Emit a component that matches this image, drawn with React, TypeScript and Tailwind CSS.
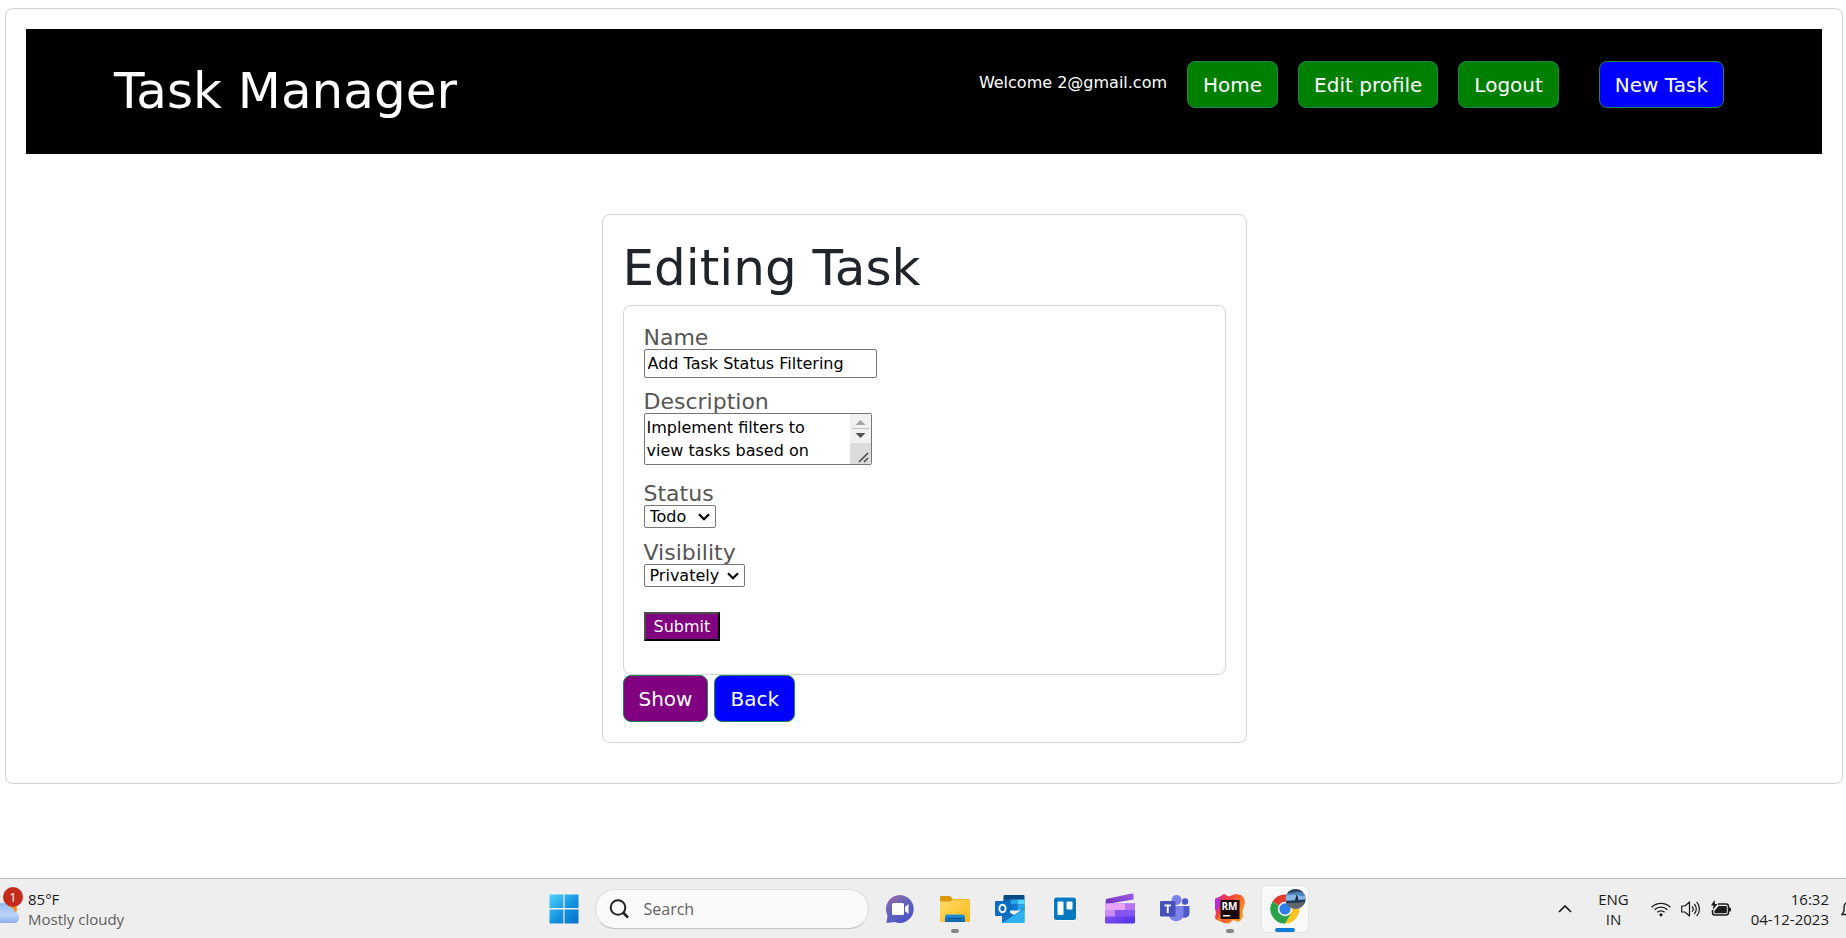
import type { ReactNode } from "react";

const navButton =
  "flex h-[47px] items-center rounded-lg border border-[#198754] px-[15px] text-xl text-white";

function StartIcon() {
  return (
    <svg width="30" height="30" viewBox="0 0 30 30" aria-hidden="true">
      <defs>
        <linearGradient id="win" x1="0" y1="0" x2="1" y2="1">
          <stop offset="0" stopColor="#4fd3fd" />
          <stop offset="0.55" stopColor="#1492de" />
          <stop offset="1" stopColor="#0570cb" />
        </linearGradient>
      </defs>
      <path
        d="M1 0.5h13.3v13.6H0.500V1zM15.500 0.500H29l.5.5v13.100H15.500zM.5 15.600h13.800V29.500H1L.5 29zM15.500 15.600h14V29l-.5.5H15.500z"
        fill="url(#win)"
      />
    </svg>
  );
}

function ChatIcon() {
  return (
    <svg width="30" height="30" viewBox="0 0 30 30" aria-hidden="true">
      <defs>
        <linearGradient id="chat" x1="0" y1="0" x2="0.6" y2="1">
          <stop offset="0" stopColor="#a56cae" />
          <stop offset="0.5" stopColor="#6264b8" />
          <stop offset="1" stopColor="#4f52c4" />
        </linearGradient>
      </defs>
      <path d="M15 1a14 14 0 1 1-5.500 27L1.500 29l1-7.500A14 14 0 0 1 15 1z" fill="url(#chat)" />
      <rect x="7" y="9" width="12" height="12" rx="1.500" fill="#fff" />
      <path d="M20 13l3.500-3v10L20 17z" fill="#fff" />
    </svg>
  );
}

function FolderIcon() {
  return (
    <svg width="30" height="30" viewBox="0 0 30 30" aria-hidden="true">
      <defs>
        <linearGradient id="fold" x1="0" y1="0" x2="1" y2="1">
          <stop offset="0" stopColor="#ffdc6a" />
          <stop offset="1" stopColor="#fbb917" />
        </linearGradient>
        <linearGradient id="foldtab" x1="0" y1="0" x2="0" y2="1">
          <stop offset="0" stopColor="#1b93dc" />
          <stop offset="1" stopColor="#0f65ae" />
        </linearGradient>
      </defs>
      <path d="M0 3.500C0 2.500.7 2 1.500 2H10l3 3h15.500c1 0 1.500.5 1.500 1.500V10H0z" fill="#dd9a08" />
      <path d="M0 7.500h10.500l2.500-2H30V28H0z" fill="url(#fold)" />
      <path d="M5 28v-5a2.500 2.500 0 0 1 2.500-2.500h15A2.500 2.500 0 0 1 25 23v5z" fill="url(#foldtab)" />
      <rect x="8" y="24" width="14" height="1" fill="#0b4b86" />
    </svg>
  );
}

function OutlookIcon() {
  return (
    <svg width="30" height="30" viewBox="0 0 30 30" aria-hidden="true">
      <path d="M9.500 1h19a1 1 0 0 1 1 1v14h-21V2a1 1 0 0 1 1-1z" fill="#0a4a86" />
      <path d="M8.500 5.500h7v5h-7z" fill="#0f62a8" />
      <path d="M15.500 5.500h7v5h-7z" fill="#28a8ea" />
      <path d="M22.500 5.500h7v5h-7z" fill="#50d9ff" />
      <path d="M8.500 10.500h7v6h-7z" fill="#0c559c" />
      <path d="M15.500 10.500h7v6h-7z" fill="#0f78d4" />
      <path d="M22.500 10.500h7v6h-7z" fill="#28a8ea" />
      <path d="M7 15l12 6L29.500 14v14a1 1 0 0 1-1 1H8a1 1 0 0 1-1-1z" fill="#1f8edb" />
      <path d="M7 28L29.500 15.500V28a1 1 0 0 1-1 1H8a1 1 0 0 1-1-1z" fill="#2fb0ee" />
      <path d="M7 15l12 6-11 7.500L7 28z" fill="#1371be" />
      <rect x="0" y="7" width="15" height="15" rx="1" fill="#0b6cc4" />
      <ellipse cx="7.500" cy="14.500" rx="3.100" ry="3.700" fill="none" stroke="#fff" strokeWidth="1.900" />
    </svg>
  );
}

function TrelloIcon() {
  return (
    <svg width="30" height="30" viewBox="0 0 30 30" aria-hidden="true">
      <rect x="3" y="2.500" width="24" height="24.500" rx="3" fill="#f8fbfd" />
      <rect x="4" y="3.500" width="22" height="22.500" rx="2.500" fill="#0579c0" />
      <rect x="7.500" y="7.500" width="6" height="13.500" rx="1" fill="#fff" />
      <rect x="16.500" y="7.500" width="6" height="8" rx="1" fill="#fff" />
    </svg>
  );
}

function ClipIcon() {
  return (
    <svg width="30" height="31" viewBox="0 0 30 31" aria-hidden="true">
      <defs>
        <linearGradient id="clipTop" x1="0" y1="1" x2="1" y2="0">
          <stop offset="0" stopColor="#6a35b8" />
          <stop offset="1" stopColor="#a45be6" />
        </linearGradient>
        <linearGradient id="clip" x1="0" y1="0" x2="1" y2="1">
          <stop offset="0" stopColor="#9b5cf0" />
          <stop offset="1" stopColor="#4b32ea" />
        </linearGradient>
      </defs>
      <path d="M1 6L26.500.5 28.500 1v5.500L2 11 .5 10z" fill="url(#clipTop)" />
      <path d="M0 10.500h30V29a1.500 1.500 0 0 1-1.500 1.500h-27A1.500 1.500 0 0 1 0 29z" fill="url(#clip)" />
      <path d="M0 11.500a1 1 0 0 1 1-1h19v6.500H0z" fill="#e8a2f7" />
      <path d="M20 10.500h9a1 1 0 0 1 1 1V17H20z" fill="#b974f3" />
      <path d="M0 17h10v6.500H0z" fill="#c98bf6" />
      <path d="M10 17h20v6.500H10z" fill="#8455f0" />
    </svg>
  );
}

function TeamsIcon() {
  return (
    <svg width="30" height="30" viewBox="0 0 30 30" aria-hidden="true">
      <circle cx="25" cy="7.500" r="3.200" fill="#5059c9" />
      <path d="M20 12h8.500a1 1 0 0 1 1 1v6a5 5 0 0 1-9.500 2z" fill="#5059c9" />
      <circle cx="16.500" cy="6" r="5" fill="#7b83eb" />
      <path d="M9 12h13.500a1 1 0 0 1 1 1v8a7.500 7.500 0 0 1-14.500 1z" fill="#7b83eb" />
      <rect x="0" y="7" width="15.500" height="15.500" rx="1.200" fill="#4650b8" />
      <path d="M4.500 10.500h6.500v1.800H8.700V19H6.800v-6.700H4.500z" fill="#fff" />
    </svg>
  );
}

function RubyMineIcon() {
  return (
    <svg width="30" height="30" viewBox="0 0 30 30" aria-hidden="true">
      <defs>
        <linearGradient id="rm" x1="0" y1="0" x2="1" y2="0.600">
          <stop offset="0" stopColor="#e0208c" />
          <stop offset="0.450" stopColor="#f4443a" />
          <stop offset="1" stopColor="#fb9a1e" />
        </linearGradient>
      </defs>
      <path
        d="M0 5l6-3 3-2 5 2.500L20 0l6 1 3 3 1 5-2.500 8 .5 6-4 5-6-2-4 3.500-5-.5-8-3.500L0 24l1-6z"
        fill="url(#rm)"
      />
      <path d="M0 5l5-2v9l-4 6-1-3z" fill="#b52fd0" />
      <path d="M2 25l5-7v10z" fill="#fc801d" />
      <rect x="5.500" y="6" width="19" height="19" fill="#180609" />
      <text x="6.500" y="15.500" fontSize="10" fontWeight="700" fontFamily="Open Sans, sans-serif" fill="#fff">
        RM
      </text>
      <rect x="8" y="21" width="7" height="1.500" fill="#fff" />
    </svg>
  );
}

function ChromeIcon() {
  return (
    <svg width="48" height="48" viewBox="0 0 48 48" aria-hidden="true">
      <defs>
        <clipPath id="avatar">
          <circle cx="35" cy="13.500" r="10.500" />
        </clipPath>
      </defs>
      <path d="M24 24L11.000 16.500A15 15 0 0 1 37.000 16.500z" fill="#e33b2e" />
      <path d="M24 24L37 16.500A15 15 0 0 1 24 39z" fill="#fcc31e" />
      <path d="M24 24V39A15 15 0 0 1 11 16.500z" fill="#2aa24c" />
      <path d="M24 16.500h13l-6.500 11.300L24 39l1-8z" fill="#fcc31e" />
      <path d="M11 16.500l6.500 11.300L24 31.500 30.500 28 24 39A15 15 0 0 1 11 16.500z" fill="#2aa24c" />
      <circle cx="24" cy="24" r="7.500" fill="#fff" />
      <circle cx="24" cy="24" r="5.900" fill="#2f7de9" />
      <g clipPath="url(#avatar)">
        <rect x="24" y="3" width="22" height="21" fill="#4d83bd" />
        <path d="M24 3h22v4l-9-1-13 2z" fill="#34435c" />
        <path d="M24 10l9-1 12 2v3l-20 1z" fill="#87b5e5" />
        <path d="M24 16l22-2v3l-20 2z" fill="#233a57" />
        <path d="M24 18l22-1v7H24z" fill="#61656e" />
        <path d="M36 9l1.500 2.500.5 4.500h-4l1-3z" fill="#1c2c46" />
      </g>
    </svg>
  );
}

function TaskbarApp({ label, marker, active, children }: {
  label: string;
  marker?: boolean;
  active?: boolean;
  children: ReactNode;
}) {
  return (
    <button
      type="button"
      aria-label={label}
      className={
        active
          ? "relative flex size-12 items-center justify-center rounded-md border border-[#e4e4e4] bg-[#f9f9f9]"
          : "relative flex size-12 items-center justify-center"
      }
    >
      {children}
      {marker && <span className="absolute bottom-0 left-5 h-1 w-2 rounded-full bg-[#868686]" />}
      {active && <span className="absolute bottom-0 left-[13px] h-1 w-5 rounded-full bg-[#0a7ad6]" />}
    </button>
  );
}

function Taskbar() {
  return (
    <footer className="mt-auto grid h-[60px] grid-cols-[1fr_auto_1fr] items-center overflow-hidden border-t border-[#bababa] bg-[#eeeeee] pl-0.5 font-['Open_Sans',sans-serif] text-[15px] text-[#1b1b1b]">
      <div className="flex items-center gap-1">
        <svg width="20" height="40" viewBox="0 0 20 40" className="ml-0.5 overflow-visible" aria-hidden="true">
          <defs>
            <linearGradient id="cloud" x1="0" y1="0" x2="0" y2="1">
              <stop offset="0" stopColor="#92b9ee" />
              <stop offset="0.6" stopColor="#bcd4f8" />
              <stop offset="1" stopColor="#8eaee6" />
            </linearGradient>
          </defs>
          <circle cx="6" cy="20" r="7" fill="#f58a1c" />
          <path d="M-14 34a8 8 0 0 1 2-15A10 10 0 0 1 5 18a7 7 0 0 1 5 5 5.600 5.600 0 0 1-1 11z" transform="translate(1)" fill="url(#cloud)" />
          <circle cx="9" cy="8" r="10" fill="#c42b1c" />
          <text x="9" y="13" fontSize="13" textAnchor="middle" fill="#fff">1</text>
        </svg>
        <div className="leading-5">
          <p>85°F</p>
          <p className="text-[#5e5e5e]">Mostly cloudy</p>
        </div>
      </div>

      <div className="flex items-center gap-[7px]">
        <TaskbarApp label="Start"><StartIcon /></TaskbarApp>
        <label className="flex h-10 w-[274px] items-center gap-[15px] rounded-full border border-[#dcdcdc] border-b-[#c2c2c2] bg-[#fafafa] pl-[13px]">
          <svg width="20" height="20" viewBox="0 0 20 20" fill="none" stroke="#222" strokeWidth="2" className="shrink-0" aria-hidden="true">
            <circle cx="9" cy="8.500" r="7.300" />
            <path d="M14 13.500l5 5" strokeWidth="2.600" />
          </svg>
          <input
            type="text"
            aria-label="Search"
            placeholder="Search"
            className="w-full min-w-0 bg-transparent text-base outline-none placeholder:text-[#616161]"
          />
        </label>
        <TaskbarApp label="Chat"><ChatIcon /></TaskbarApp>
        <TaskbarApp label="File Explorer" marker><FolderIcon /></TaskbarApp>
        <TaskbarApp label="Outlook"><OutlookIcon /></TaskbarApp>
        <TaskbarApp label="Trello"><TrelloIcon /></TaskbarApp>
        <TaskbarApp label="Clipchamp"><ClipIcon /></TaskbarApp>
        <TaskbarApp label="Teams"><TeamsIcon /></TaskbarApp>
        <TaskbarApp label="RubyMine" marker><RubyMineIcon /></TaskbarApp>
        <TaskbarApp label="Chrome" active><ChromeIcon /></TaskbarApp>
      </div>

      <div className="flex items-center justify-end">
        <button type="button" aria-label="Show hidden icons">
          <svg width="14" height="9" viewBox="0 0 14 9" fill="none" stroke="#1b1b1b" strokeWidth="1.700" aria-hidden="true">
            <path d="M1 8l6-6 6 6" />
          </svg>
        </button>
        <div className="ml-[26px] text-center leading-5">
          <p>ENG</p>
          <p>IN</p>
        </div>
        <div className="ml-[22px] flex items-center gap-2.5">
          <svg width="20" height="16" viewBox="0 0 20 16" fill="none" stroke="#1b1b1b" strokeWidth="1.300" aria-label="Wi-Fi">
            <path d="M.6 6.200a13.300 13.300 0 0 1 18.800 0M3.600 8.700a9 9 0 0 1 12.800 0M6.400 11.300a5.100 5.100 0 0 1 7.200 0" />
            <circle cx="10" cy="13.800" r="1.600" fill="#1b1b1b" stroke="none" />
          </svg>
          <svg width="20" height="18" viewBox="0 0 20 18" fill="none" stroke="#1b1b1b" strokeWidth="1.200" strokeLinejoin="round" aria-label="Volume">
            <path d="M.7 6h3.200l4.600-4v14l-4.600-4H.7z" />
            <path d="M11 6.300a4 4 0 0 1 0 5.400M13.300 4a7.300 7.300 0 0 1 0 10M15.600 1.800a10.500 10.500 0 0 1 0 14.400" />
          </svg>
          <svg width="20" height="18" viewBox="0 0 20 18" aria-label="Battery charging">
            <path d="M7 4h8a2.500 2.500 0 0 1 2.500 2.500v6A2.500 2.500 0 0 1 15 15H4a2.500 2.500 0 0 1-2.500-2.500V10" fill="none" stroke="#1b1b1b" strokeWidth="1.500" />
            <path d="M7.500 6H15l.8.700v5.800l-.8.700H4l-.6-.7V11z" fill="#1b1b1b" />
            <path d="M18 7.500h1a1 1 0 0 1 1 1v2a1 1 0 0 1-1 1h-1z" fill="#1b1b1b" />
            <path d="M3.500 0L0 5.500h2.500L1.800 10 6.500 4H4z" fill="#1b1b1b" />
          </svg>
        </div>
        <div className="ml-5 text-right leading-5">
          <p>16:32</p>
          <p>04-12-2023</p>
        </div>
        <svg width="5" height="18" viewBox="0 0 5 18" className="ml-3" fill="none" stroke="#1b1b1b" strokeWidth="1.400" aria-label="Notifications">
          <path d="M7 2.500C4.500 2.500 3 5 3 7.500V11l-2 3.500h8" />
        </svg>
      </div>
    </footer>
  );
}

function FormSelect({ id, label, options, width }: {
  id: string;
  label: string;
  options: string[];
  width: string;
}) {
  return (
    <div className="flex flex-col items-start">
      <label htmlFor={id} className="text-[22px] leading-[22px] text-[#555]">{label}</label>
      <div className={`relative ${width}`}>
        <select
          id={id}
          className="block h-[23px] w-full appearance-none rounded-[2px] border border-[#767676] bg-white pl-[5px] text-base leading-5 text-black"
        >
          {options.map((option) => (
            <option key={option}>{option}</option>
          ))}
        </select>
        <svg width="12" height="8" viewBox="0 0 12 8" className="pointer-events-none absolute top-2 right-1.5" fill="none" stroke="#000" strokeWidth="2.200" aria-hidden="true">
          <path d="M1 1.200l5 5 5-5" />
        </svg>
      </div>
    </div>
  );
}

export default function App() {
  return (
    <div className="flex min-h-screen flex-col bg-white font-['DejaVu_Sans',Verdana,sans-serif] text-[#212529]">
      <div className="mt-2 mr-[3px] ml-[5px] rounded-lg border border-[#d3d3d3] px-5 pt-5 pb-10">
        <header className="flex h-[125px] items-start justify-between bg-black pt-8 pr-[98px] pl-[88px] text-white">
          <h1 className="text-[50px] leading-[60px]">Task Manager</h1>
          <nav className="flex items-start gap-5">
            <span className="pt-2.5 text-base">Welcome 2@gmail.com</span>
            <a href="#home" className={`${navButton} bg-[#008000]`}>Home</a>
            <a href="#profile" className={`${navButton} bg-[#008000]`}>Edit profile</a>
            <button type="button" className={`${navButton} bg-[#008000]`}>Logout</button>
            <a href="#new" className={`${navButton} ml-5 bg-[#0000ff]`}>New Task</a>
          </nav>
        </header>

        <main className="mx-auto mt-[60px] w-[645px] max-w-full rounded-lg border border-[#d3d3d3] px-5 pt-[23px] pb-5">
          <h2 className="mb-[7px] text-[50px] leading-[60px]">Editing Task</h2>
          <form
            className="rounded-lg border border-[#d3d3d3] px-5 pt-[21px] pb-[33px]"
            onSubmit={(event) => event.preventDefault()}
          >
            <div className="flex flex-col items-start">
              <label htmlFor="name" className="text-[22px] leading-[22px] text-[#555]">Name</label>
              <input
                id="name"
                type="text"
                defaultValue="Add Task Status Filtering"
                className="h-[29px] w-[233px] rounded-[2px] border border-[#767676] px-[3px] text-base text-black"
              />
            </div>
            <div className="mt-[13px] flex flex-col items-start">
              <label htmlFor="description" className="text-[22px] leading-[22px] text-[#555]">Description</label>
              <div className="relative w-[228px]">
                <textarea
                  id="description"
                  rows={2}
                  defaultValue="Implement filters to view tasks based on their status"
                  className="block h-[52px] w-full resize-none overflow-hidden rounded-[2px] border border-[#767676] py-[2px] pr-[24px] pl-[2px] text-base leading-[23px] text-black"
                />
                <svg width="21" height="50" viewBox="0 0 21 50" className="pointer-events-none absolute top-px right-px" aria-hidden="true">
                  <rect width="21" height="50" fill="#f1f1f1" />
                  <path d="M5.500 11l5-5 5 5z" fill="#a3a3a3" />
                  <rect x="2" y="14" width="17" height="1" fill="#c1c1c1" />
                  <path d="M5.500 19l5 5 5-5z" fill="#505050" />
                  <rect y="29" width="21" height="21" fill="#dcdcdc" />
                  <path d="M9 48l9-9M14 48l4-4" stroke="#444" strokeWidth="1.500" />
                </svg>
              </div>
            </div>
            <div className="mt-[18px]">
              <FormSelect id="status" label="Status" options={["Todo", "Doing", "Done"]} width="w-[72px]" />
            </div>
            <div className="mt-3.5">
              <FormSelect id="visibility" label="Visibility" options={["Privately", "Publicly"]} width="w-[101px]" />
            </div>
            <button
              type="submit"
              className="mt-[25px] flex h-[29px] items-center border-2 border-t-[#4d4d4d] border-r-black border-b-black border-l-[#4d4d4d] bg-[#800080] px-2 text-base text-white"
            >
              Submit
            </button>
          </form>
          <div className="flex gap-1.5">
            <a href="#show" className={`${navButton} bg-[#800080]`}>Show</a>
            <a href="#back" className={`${navButton} bg-[#0000ff]`}>Back</a>
          </div>
        </main>
      </div>
      <Taskbar />
    </div>
  );
}
